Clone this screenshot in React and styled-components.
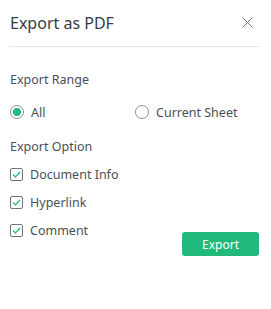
import React, { useState } from "react";
import styled, { createGlobalStyle } from "styled-components";

const GlobalStyle = createGlobalStyle`
  html, body {
    margin: 0;
    padding: 0;
    background: #ffffff;
  }
  body {
    font-family: "Noto Sans", "Open Sans", "Liberation Sans", sans-serif;
  }
`;

const Dialog = styled.div`
  width: 271px;
  height: 309px;
  box-sizing: border-box;
  padding: 0 12px 0 10px;
  background: #fff;
  color: #474c57;
`;

const Header = styled.div`
  height: 46px;
  display: flex;
  align-items: center;
  justify-content: space-between;
  border-bottom: 1px solid #e3e5ea;
`;

const Title = styled.h1`
  margin: 0;
  font-size: 16px;
  font-weight: 400;
  color: #363b47;
  line-height: 20px;
  margin-top: -1px;
`;

const CloseButton = styled.button`
  border: 0;
  background: none;
  padding: 0;
  width: 14px;
  height: 14px;
  margin-right: 5px;
  margin-top: -2px;
  display: flex;
  align-items: center;
  justify-content: center;
  cursor: pointer;
`;

const Section = styled.div`
  padding-top: ${(p) => p.$top}px;
`;

const Label = styled.div`
  font-size: 12.5px;
  line-height: 18px;
  color: #4a4f59;
`;

const RadioRow = styled.div`
  display: grid;
  grid-template-columns: 125px 1fr;
  margin-top: 14px;
`;

const Option = styled.label`
  display: flex;
  align-items: center;
  gap: 7px;
  font-size: 12.5px;
  color: #4a4f59;
  height: ${(p) => p.$h || 18}px;
  cursor: pointer;
`;

const RadioCircle = styled.span`
  width: 14px;
  height: 14px;
  box-sizing: border-box;
  border-radius: 50%;
  border: 1px solid #8a8e96;
  display: flex;
  align-items: center;
  justify-content: center;
  flex: none;
  &::after {
    content: "";
    width: 8px;
    height: 8px;
    border-radius: 50%;
    background: ${(p) => (p.$on ? "#20b97a" : "transparent")};
  }
`;

const CheckList = styled.div`
  display: flex;
  flex-direction: column;
  margin-top: 4px;
`;

const CheckBox = styled.span`
  width: 13px;
  height: 13px;
  box-sizing: border-box;
  border: 1px solid #70747c;
  border-radius: 2px;
  display: flex;
  align-items: center;
  justify-content: center;
  flex: none;
`;

const Footer = styled.div`
  display: flex;
  justify-content: flex-end;
  margin-top: -12px;
`;

const ExportButton = styled.button`
  width: 77px;
  height: 24px;
  border: 0;
  border-radius: 3px;
  background: #21b97b;
  color: #fff;
  font-family: inherit;
  font-size: 12px;
  cursor: pointer;
`;

const Check = () => (
  <svg width="9" height="7" viewBox="0 0 9 7">
    <path d="M1 3.5 L3.5 6 L8 1" fill="none" stroke="#20b97a" strokeWidth="1.2" />
  </svg>
);

export default function App() {
  const [range, setRange] = useState("all");
  const [opts, setOpts] = useState({ info: true, link: true, comment: true });
  const toggle = (k) => setOpts({ ...opts, [k]: !opts[k] });

  return (
    <>
      <GlobalStyle />
      <Dialog>
        <Header>
          <Title>Export as PDF</Title>
          <CloseButton aria-label="close">
            <svg width="11" height="11" viewBox="0 0 11 11">
              <path d="M0.5 0.5 L10.5 10.5 M10.5 0.5 L0.5 10.5" stroke="#6f737b" strokeWidth="1" />
            </svg>
          </CloseButton>
        </Header>

        <Section $top={24}>
          <Label>Export Range</Label>
          <RadioRow>
            <Option onClick={() => setRange("all")}>
              <RadioCircle $on={range === "all"} />
              All
            </Option>
            <Option onClick={() => setRange("sheet")}>
              <RadioCircle $on={range === "sheet"} />
              Current Sheet
            </Option>
          </RadioRow>
        </Section>

        <Section $top={17}>
          <Label>Export Option</Label>
          <CheckList>
            <Option $h={28} onClick={() => toggle("info")}>
              <CheckBox>{opts.info && <Check />}</CheckBox>
              Document Info
            </Option>
            <Option $h={28} onClick={() => toggle("link")}>
              <CheckBox>{opts.link && <Check />}</CheckBox>
              Hyperlink
            </Option>
            <Option $h={28} onClick={() => toggle("comment")}>
              <CheckBox>{opts.comment && <Check />}</CheckBox>
              Comment
            </Option>
          </CheckList>
        </Section>

        <Footer>
          <ExportButton>Export</ExportButton>
        </Footer>
      </Dialog>
    </>
  );
}
